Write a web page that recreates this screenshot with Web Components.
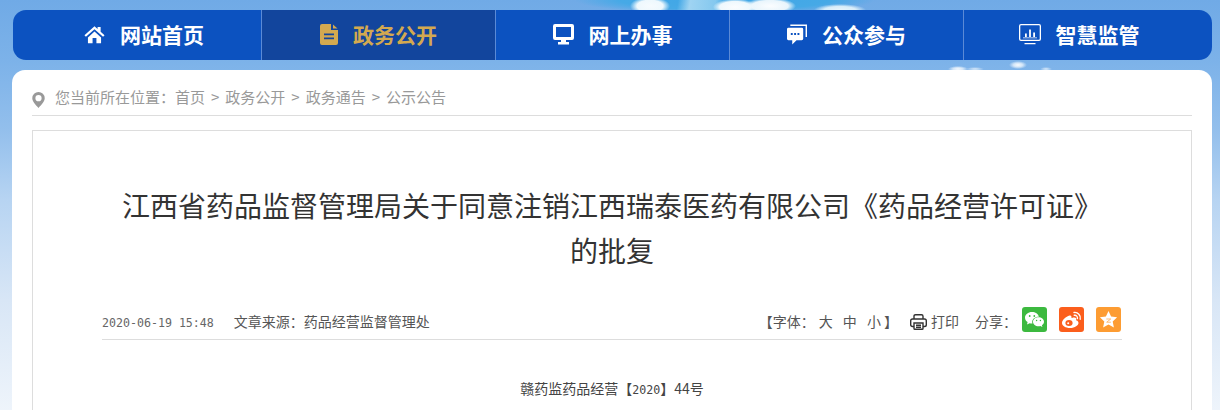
<!DOCTYPE html>
<html lang="zh-CN">
<head>
<meta charset="utf-8">
<title>江西省药品监督管理局</title>
<style>
	html, body { margin: 0; height: 100%; overflow: hidden; }
	body {
		background:
			radial-gradient(ellipse 20px 9px at 650px 6px, #f6fbfe 0, #eef8fd 65%, transparent 100%),
			radial-gradient(ellipse 22px 8px at 735px 7px, #fbfdff 0, #eef8fd 70%, transparent 100%),
			radial-gradient(ellipse 26px 8px at 770px 6px, #fbfdff 0, #e9f5fc 70%, transparent 100%),
			radial-gradient(ellipse 26px 6px at 840px 10px, #e8f5fc 0, #d8edf9 60%, transparent 100%),
			radial-gradient(ellipse 10px 3px at 958px 69px, #f7fbfe 0, rgba(247,251,254,.7) 50%, transparent 100%),
			radial-gradient(ellipse 9px 2px at 975px 69px, rgba(247,251,254,.8) 0, transparent 100%),
			radial-gradient(ellipse 9px 4px at 1018px 65px, #f7fbfe 0, rgba(247,251,254,.7) 50%, transparent 100%),
			radial-gradient(ellipse 6px 2px at 1046px 69px, rgba(247,251,254,.8) 0, transparent 100%),
			linear-gradient(100deg, transparent 668px, rgba(190,226,246,.75) 680px, rgba(160,214,242,.7) 705px, transparent 715px) 0 0 / 100% 10px no-repeat,
			radial-gradient(ellipse 150px 14px at 725px 0, #3fa6e6 0, #46a9e6 70%, transparent 100%),
			linear-gradient(#70aae6 0, #7cb2e9 60px, #93bfec 130px, #b7d4f2 200px, #d8e6f6 300px, #eef4fb 410px);
		font-family: "Noto Sans CJK SC", "Liberation Sans", sans-serif;
	}
</style>
</head>
<body>
<template id="tpl-nav">
	<style>
		:host { display: flex; height: 50px; margin: 10px 8px 0 13px; background: #0c52c0; border-radius: 13px; overflow: hidden; }
		::slotted(nav-item) { flex: 0 0 234px; }
		::slotted(nav-item:first-child) { flex-basis: 249px; padding-left: 14px; }
		::slotted(nav-item:last-child) { flex: 1; padding-right: 18px; border-right: 0; }
	</style>
	<slot></slot>
</template>
<template id="tpl-item">
	<style>
		:host { display: flex; align-items: center; justify-content: center; gap: 15px; box-sizing: border-box; border-right: 1px solid #5b8ad6; color: #fff; font-size: 21px; font-weight: 700; }
		:host([active]) { background: #12459d; color: #d3a950; }
		.txt { padding-bottom: 2px; }
		::slotted(svg) { display: block; width: 21px; height: 21px; margin-bottom: 1px; fill: currentColor; }
	</style>
	<slot name="icon"></slot><span class="txt"><slot></slot></span>
</template>
<template id="tpl-crumb">
	<style>
		:host { display: flex; align-items: center; gap: 10px; height: 45px; margin: 0 20px; border-bottom: 1px solid #ddd; color: #999; font-size: 15px; }
		.path { display: flex; gap: 6px; padding-top: 8px; }
		svg { width: 13px; height: 16px; fill: #999; margin-top: 15px; }
	</style>
	<svg viewBox="0 0 14 18"><path fill-rule="evenodd" d="M7 0a7 7 0 0 1 7 7c0 4-4 7.500-7 11C4 14.500 0 11 0 7a7 7 0 0 1 7-7zm0 3.500a3.500 3.500 0 1 0 0 7 3.500 3.500 0 0 0 0-7z"/></svg>
	<div class="path"><slot></slot></div>
</template>
<template id="tpl-num"><style>:host { display: inline; font-family: "DejaVu Sans Mono", monospace; font-size: 11.620px; }</style><slot></slot></template>
<template id="tpl-article">
	<style>
		:host { display: block; margin: 14px 20px 0; border: 1px solid #ddd; border-bottom: 0; height: 300px; padding: 0 69px; color: #333; }
		.title { margin: 52px 0 0; padding: 0 20px; font-size: 28px; font-weight: 400; line-height: 45px; text-align: center; }
		.body { margin: 37px 0 0; font-size: 14px; line-height: 22px; text-align: center; color: #444; }
	</style>
	<h1 class="title"><slot name="title"></slot></h1>
	<slot name="meta"></slot>
	<p class="body"><slot></slot></p>
</template>
<template id="tpl-meta">
	<style>
		:host { display: flex; align-items: center; justify-content: space-between; height: 37px; margin-top: 29px; border-bottom: 1px solid #ddd; color: #555; font-size: 14px; }
		.date { margin-right: 20px; color: #666; }
		.side { display: flex; align-items: center; margin-right: 1px; }
		.font span { margin: 0 3px 0 4px; }
		.print { display: flex; align-items: center; gap: 4px; margin: 0 16px 0 12px; }
		.share { display: flex; gap: 12px; margin: 0 0 2px 5px; }
		.share svg { width: 25px; height: 25px; display: block; }
		.print svg { width: 17px; height: 16px; margin-top: 3px; }
	</style>
	<div><num-text class="date">2020-06-19 15:48</num-text><span>文章来源：药品经营监督管理处</span></div>
	<div class="side">
		<span class="font">【字体：<span>大</span> <span>中</span> <span>小</span>】</span>
		<span class="print"><svg viewBox="0 0 17 16" fill="none" stroke="#333" stroke-width="1.400"><path d="M4 5V2.200q0-1.500 1.500-1.500h6q1.500 0 1.500 1.500V5"/><path d="M4 12.500H2.500q-1.800 0-1.800-1.800V6.800Q.7 5 2.500 5h12q1.800 0 1.800 1.800v3.900q0 1.800-1.800 1.800H13"/><path d="M4 9h9v5.500q0 .8-.8.8H4.800q-.8 0-.8-.8zM6 11.200h5M6 13.200h5"/></svg>打印</span>
		<span>分享：</span>
		<div class="share">
			<svg viewBox="0 0 25 25"><rect width="25" height="25" rx="3" fill="#3cb93f"/><path d="M10 5c-3.900 0-7 2.500-7 5.700 0 1.800 1 3.400 2.600 4.400L5 17.500l2.600-1.300c.8.200 1.600.3 2.400.3h.5c-.2-.5-.3-1-.3-1.500 0-2.900 2.800-5.200 6.300-5.200h.4C16.300 7 13.400 5 10 5z" fill="#fff"/><path d="M22 14.800c0-2.600-2.500-4.500-5.500-4.500s-5.500 2-5.500 4.500 2.500 4.500 5.500 4.500c.6 0 1.300-.1 1.900-.3l2 1.100-.5-1.800c1.300-.8 2.100-2.100 2.100-3.500z" fill="#fff"/><circle cx="7.700" cy="9" r=".9" fill="#3cb93f"/><circle cx="12.300" cy="9" r=".9" fill="#3cb93f"/><circle cx="14.600" cy="13.500" r=".7" fill="#3cb93f"/><circle cx="18.400" cy="13.500" r=".7" fill="#3cb93f"/></svg>
			<svg viewBox="0 0 25 25"><rect width="25" height="25" rx="3" fill="#fb5e1c"/><path d="M10.500 8.500C7 9.500 3 13 3 16c0 2.700 3.500 5 8 5 5 0 8.500-2.700 8.500-5 0-1.700-1.500-2.500-2.500-2.800.7-1.500.3-2.800-2-2.800-1 0-2 .4-2.500.6.300-1.500-.5-2.900-1.500-2.500z" fill="#fff"/><ellipse cx="10" cy="16" rx="3.600" ry="3" fill="#fb5e1c"/><circle cx="9.200" cy="16.300" r="1" fill="#fff"/><path d="M15 5.500a5.500 5.500 0 0 1 6.200 6.700M15.300 8.300a2.700 2.700 0 0 1 3.100 3.300" fill="none" stroke="#fff" stroke-width="1.400" stroke-linecap="round"/></svg>
			<svg viewBox="0 0 25 25"><rect width="25" height="25" rx="3" fill="#fd9c32"/><path d="M12.500 4l2.600 5.500 6 .8-4.400 4.100 1.200 6-5.400-3-5.400 3 1.200-6-4.400-4.100 6-.8z" fill="#fff"/><path d="M10.300 12h4.400l-4 3.200h4.200" fill="none" stroke="#fdb56a" stroke-width=".9"/></svg>
		</div>
	</div>
</template>
<template id="tpl-card">
	<style>
		:host { display: block; margin: 10px 8px 0 12px; background: #fff; border-radius: 13px 13px 0 0; height: 340px; overflow: hidden; }
	</style>
	<slot></slot>
</template>

<site-nav>
	<nav-item><svg slot="icon" viewBox="0 0 24 24"><path d="M12 2.500L.5 12.800 2.200 14.700 12 6l9.800 8.700 1.700-1.900L19 8.800V3.500h-3.500v2.200zM4.500 15.300L12 8.600l7.500 6.700V22h-5.300v-6H9.800v6H4.500z"/></svg>网站首页</nav-item>
	<nav-item active><svg slot="icon" viewBox="0 0 18 21" style="width:18px"><path fill-rule="evenodd" d="M2 0h9v6h7v13a2 2 0 0 1-2 2H2a2 2 0 0 1-2-2V2a2 2 0 0 1 2-2zm11 .5L17.500 4.500H13zM4 9.500v1.800h10V9.500zm0 4v1.800h10v-1.800z"/></svg>政务公开</nav-item>
	<nav-item><svg slot="icon" viewBox="0 0 21 21"><path fill-rule="evenodd" d="M2 0h17a2 2 0 0 1 2 2v12a2 2 0 0 1-2 2h-6v2h3v2.500H5V18h3v-2H2a2 2 0 0 1-2-2V2a2 2 0 0 1 2-2zm1 3v10h15V3z"/></svg>网上办事</nav-item>
	<nav-item><svg slot="icon" viewBox="0 0 21 21" style="width:20px"><path fill-rule="evenodd" d="M1.500 3.500h14a1.500 1.500 0 0 1 1.500 1.500v10a1.500 1.500 0 0 1-1.500 1.500H10L5.500 21v-4.500h-4A1.500 1.500 0 0 1 0 15V5a1.500 1.500 0 0 1 1.500-1.500zM4 9v2h2V9zm3.500 0v2h2V9zM11 9v2h2V9z"/><path d="M3.500 0H21v13h-1.500V1.500h-16z"/></svg>公众参与</nav-item>
	<nav-item><svg slot="icon" viewBox="0 0 22 21" style="width:22px"><path fill-rule="evenodd" d="M2 0h18a2 2 0 0 1 2 2v13a2 2 0 0 1-2 2H2a2 2 0 0 1-2-2V2a2 2 0 0 1 2-2zm0 1.300a.7.7 0 0 0-.7.7v13a.7.7 0 0 0 .7.7h18a.7.7 0 0 0 .7-.7V2a.7.7 0 0 0-.7-.7zM5.500 19h11v1.300h-11zM6 9.500h1.800V13H6zm4.100-4h1.800V13h-1.800zm4.100 3H16V13h-1.800zM4 13.500h14v.8H4z"/></svg>智慧监管</nav-item>
</site-nav>
<content-card>
	<bread-crumb><span>您当前所在位置：首页</span><span>&gt;</span><span>政务公开</span><span>&gt;</span><span>政务通告</span><span>&gt;</span><span>公示公告</span></bread-crumb>
	<article-box>
		<span slot="title">江西省药品监督管理局关于同意注销江西瑞泰医药有限公司《药品经营许可证》的批复</span>
		<article-meta slot="meta"></article-meta>
		赣药监药品经营【<num-text>2020</num-text>】44号
	</article-box>
</content-card>
<script>
	class ElementoBase extends HTMLElement {
		constructor() {
			super();
			const tpl = document.getElementById(this.constructor.tpl);
			this.attachShadow({mode: 'open'}).append(tpl.content.cloneNode(true));
		}
	}
	const elementos = {'site-nav': 'tpl-nav', 'nav-item': 'tpl-item', 'content-card': 'tpl-card', 'bread-crumb': 'tpl-crumb', 'num-text': 'tpl-num', 'article-box': 'tpl-article', 'article-meta': 'tpl-meta'};
	for (const [nome, tpl] of Object.entries(elementos))
		customElements.define(nome, class extends ElementoBase { static tpl = tpl; });
</script>
</body>
</html>
